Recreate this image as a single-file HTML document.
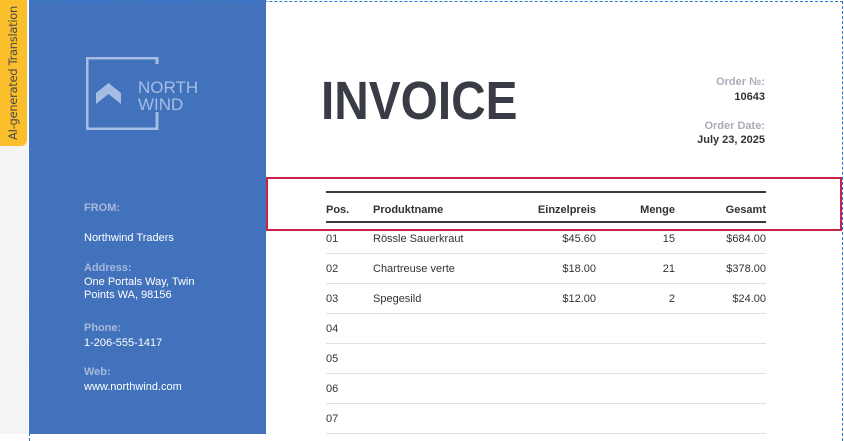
<!DOCTYPE html>
<html><head><meta charset="utf-8"><style>
*{margin:0;padding:0;box-sizing:border-box}
body{width:844px;height:434px;overflow:hidden;background:#fff;font-family:"Liberation Sans",Arial,sans-serif;position:relative}
.strip{position:absolute;left:0;top:0;width:28px;height:434px;background:#f4f4f4}
.tab{position:absolute;left:0;top:0;width:27px;height:146px;background:#fbbf2c;border-radius:0 0 6px 0}
.tab span{position:absolute;left:13px;top:73px;transform:translate(-50%,-50%) rotate(-90deg);white-space:nowrap;font-size:11.5px;color:#4a4a4a;font-family:"DejaVu Sans",sans-serif;letter-spacing:-.3px}
.side{position:absolute;left:29px;top:0;width:237px;height:434px;background:#4272bb}
.frame{position:absolute;left:29px;top:1px;width:814px;height:440px;border:1px dashed #2a7ad5;border-bottom:none}
.t{position:absolute;font-size:11px;color:#fff;white-space:nowrap}
.lbl{color:#a6b9dd;font-weight:bold}
.inv{position:absolute;left:321px;top:70px;font-size:54px;font-weight:bold;color:#393c44;transform:scaleX(0.885);transform-origin:0 0}
.r{position:absolute;right:79px;font-size:11px;font-weight:bold;text-align:right;white-space:nowrap}
.tbl{position:absolute;left:326px;width:440px}
.row{position:absolute;left:0;width:440px;height:30px;font-size:11px;color:#333}
.row div{position:absolute;top:1px;white-space:nowrap}
.sel{position:absolute;left:266px;top:177px;width:576px;height:54px;border:2px solid #c8234b}
</style></head><body>
<div class="strip"></div>
<div class="tab"><span>AI-generated Translation</span></div>
<div class="side"></div>
<div class="frame"></div>
<svg style="position:absolute;left:86px;top:57px" width="114" height="73" viewBox="0 0 114 73">
<path d="M71 7 V1 H1 V72 H71 V55" fill="none" stroke="#a6bde3" stroke-width="3"/>
<path d="M10 47 L10 36 L22.5 26 L35 36 L35 47 L22.5 37 Z" fill="#a6bde3"/>
<text x="52" y="36" font-family="Liberation Sans,sans-serif" font-size="17" fill="#a6bde3">NORTH</text>
<text x="52" y="53" font-family="Liberation Sans,sans-serif" font-size="17" fill="#a6bde3">WIND</text>
</svg>
<div class="t lbl" style="left:84px;top:202px">FROM:</div>
<div class="t" style="left:84px;top:232px">Northwind Traders</div>
<div class="t lbl" style="left:84px;top:262px">Address:</div>
<div class="t" style="left:84px;top:276px;line-height:13px">One Portals Way, Twin<br>Points WA, 98156</div>
<div class="t lbl" style="left:84px;top:322px">Phone:</div>
<div class="t" style="left:84px;top:337px">1-206-555-1417</div>
<div class="t lbl" style="left:84px;top:366px">Web:</div>
<div class="t" style="left:84px;top:381px">www.northwind.com</div>
<div class="inv">INVOICE</div>
<div class="r" style="top:76px;color:#a9abb8">Order №:</div>
<div class="r" style="top:91px;color:#333">10643</div>
<div class="r" style="top:120px;color:#a9abb8">Order Date:</div>
<div class="r" style="top:134px;color:#333">July 23, 2025</div>
<div class="tbl" style="top:0">
<div style="position:absolute;left:0;top:191px;width:440px;height:2px;background:#3a3b42"></div>
<div style="position:absolute;left:0;top:221px;width:440px;height:2px;background:#3a3b42"></div>
<div class="row" style="top:203px;font-weight:bold;color:#333"><div style="left:0">Pos.</div><div style="left:47px">Produktname</div><div style="right:170px">Einzelpreis</div><div style="right:91px">Menge</div><div style="right:0">Gesamt</div></div>
<div class="row" style="top:232px;border-bottom:1px solid #e2e2e2;height:22px"><div style="left:0">01</div><div style="left:47px">Rössle Sauerkraut</div><div style="right:170px">$45.60</div><div style="right:91px">15</div><div style="right:0">$684.00</div></div>
<div class="row" style="top:262px;border-bottom:1px solid #e2e2e2;height:22px"><div style="left:0">02</div><div style="left:47px">Chartreuse verte</div><div style="right:170px">$18.00</div><div style="right:91px">21</div><div style="right:0">$378.00</div></div>
<div class="row" style="top:292px;border-bottom:1px solid #e2e2e2;height:22px"><div style="left:0">03</div><div style="left:47px">Spegesild</div><div style="right:170px">$12.00</div><div style="right:91px">2</div><div style="right:0">$24.00</div></div>
<div class="row" style="top:322px;border-bottom:1px solid #e2e2e2;height:22px"><div style="left:0">04</div></div>
<div class="row" style="top:352px;border-bottom:1px solid #e2e2e2;height:22px"><div style="left:0">05</div></div>
<div class="row" style="top:382px;border-bottom:1px solid #e2e2e2;height:22px"><div style="left:0">06</div></div>
<div class="row" style="top:412px;border-bottom:1px solid #e2e2e2;height:22px"><div style="left:0">07</div></div>
</div>
<div class="sel"></div>
</body></html>
